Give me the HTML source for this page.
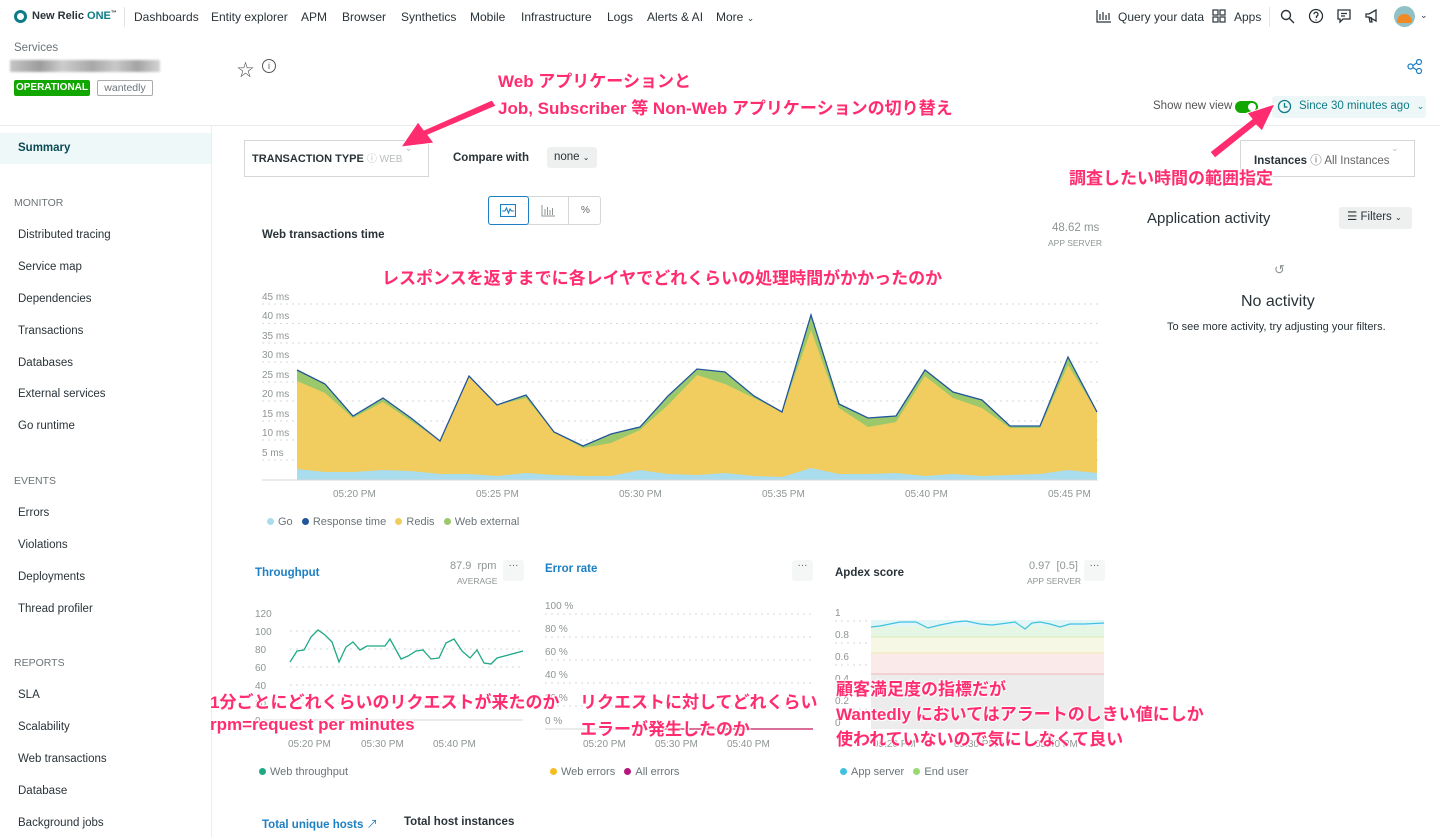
<!DOCTYPE html>
<html><head><meta charset="utf-8"><style>
*{box-sizing:border-box;margin:0;padding:0}
body{width:1440px;height:837px;overflow:hidden;background:#fff;font-family:"Liberation Sans","Noto Sans CJK JP",sans-serif;color:#293338;position:relative;font-size:12px}
.a{position:absolute;white-space:nowrap}
.nav{font-size:12px;color:#293338}
.side{font-size:11.5px;color:#293338}
.sec{font-size:10.5px;color:#6b7478}
.g{color:#8e9494}
.ann{position:absolute;white-space:nowrap;color:#ff2d6f;font-weight:bold;font-size:17px;text-shadow:0 0 2px #fff,0 0 2px #fff,1px 1px 1px #fff,-1px -1px 1px #fff;font-family:"Liberation Sans","Noto Sans CJK JP",sans-serif}
.dot{display:inline-block;width:7px;height:7px;border-radius:50%;margin-right:4px;vertical-align:0}
.leg{font-size:11px;color:#6b7478}
.ax{font-size:10px;color:#8e9494}
</style></head><body>
<!-- top nav -->
<div class="a" style="left:14px;top:10px;width:13px;height:13px;border-radius:50%;border:3px solid #0e7c86"></div>
<div class="a" style="left:32px;top:10px;font-size:11px;font-weight:bold;color:#293338">New Relic <span style="color:#0e7c86">ONE</span><sup style="font-size:6px">™</sup></div>
<div class="a" style="left:124px;top:7px;width:1px;height:20px;background:#e3e4e4"></div>
<div class="a nav" style="left:134px;top:10px">Dashboards</div>
<div class="a nav" style="left:211px;top:10px">Entity explorer</div>
<div class="a nav" style="left:301px;top:10px">APM</div>
<div class="a nav" style="left:342px;top:10px">Browser</div>
<div class="a nav" style="left:401px;top:10px">Synthetics</div>
<div class="a nav" style="left:470px;top:10px">Mobile</div>
<div class="a nav" style="left:521px;top:10px">Infrastructure</div>
<div class="a nav" style="left:607px;top:10px">Logs</div>
<div class="a nav" style="left:647px;top:10px">Alerts &amp; AI</div>
<div class="a nav" style="left:716px;top:10px">More <span style="font-size:9px">⌄</span></div>
<svg class="a" style="left:1096px;top:9px" width="16" height="14" viewBox="0 0 16 14" fill="none" stroke="#293338" stroke-width="1.2"><path d="M1 1v12h14M4 5v6M7 3v8M10 6v5M13 4v7"/></svg>
<div class="a nav" style="left:1118px;top:10px">Query your data</div>
<svg class="a" style="left:1212px;top:9px" width="14" height="14" viewBox="0 0 14 14" fill="none" stroke="#293338" stroke-width="1.2"><rect x="1" y="1" width="5" height="5"/><rect x="8" y="1" width="5" height="5"/><rect x="1" y="8" width="5" height="5"/><rect x="8" y="8" width="5" height="5"/></svg>
<div class="a nav" style="left:1234px;top:10px">Apps</div>
<div class="a" style="left:1269px;top:7px;width:1px;height:20px;background:#e3e4e4"></div>
<svg class="a" style="left:1280px;top:9px" width="15" height="15" viewBox="0 0 15 15" fill="none" stroke="#293338" stroke-width="1.4"><circle cx="6" cy="6" r="4.5"/><path d="M9.5 9.5L14 14"/></svg>
<svg class="a" style="left:1308px;top:8px" width="16" height="16" viewBox="0 0 16 16" fill="none" stroke="#293338" stroke-width="1.3"><circle cx="8" cy="8" r="6.5"/><path d="M6 6.3a2 2 0 1 1 2.5 1.9V10M8 11.5v1"/></svg>
<svg class="a" style="left:1336px;top:8px" width="16" height="16" viewBox="0 0 16 16" fill="none" stroke="#293338" stroke-width="1.3"><path d="M2 2h12v9H7l-3 3v-3H2z M5 5.5h6M5 8h4"/></svg>
<svg class="a" style="left:1364px;top:8px" width="16" height="16" viewBox="0 0 16 16" fill="none" stroke="#293338" stroke-width="1.3"><path d="M2 6h3l7-4v11l-7-4H2z M5 9l1 5h2l-1-5"/></svg>
<div class="a" style="left:1394px;top:6px;width:21px;height:21px;border-radius:50%;background:#8fc1c6;overflow:hidden"><div style="margin:8px 0 0 3px;width:15px;height:9px;background:#f08a25;border-radius:8px 8px 2px 2px"></div></div>
<div class="a" style="left:1420px;top:10px;font-size:9px">⌄</div>
<!-- header -->
<div class="a" style="left:14px;top:42px;font-size:11.5px;color:#6b7478">Services</div>
<div class="a" style="left:10px;top:60px;width:150px;height:12px;background:linear-gradient(90deg,#bbb,#8c8c8c 20%,#c4c4c4 35%,#999 55%,#c0c0c0 70%,#959595 85%,#ccc);opacity:.85;filter:blur(1px)"></div>
<div class="a" style="left:237px;top:56px;font-size:17px;color:#555">☆</div>
<div class="a" style="left:262px;top:59px;width:14px;height:14px;border-radius:50%;border:1.2px solid #555;font-size:9px;text-align:center;line-height:12px;color:#555">i</div>
<div class="a" style="left:14px;top:80px;width:76px;height:16px;background:#11a600;border-radius:2px;color:#fff;font-size:10px;font-weight:bold;text-align:center;line-height:16px">OPERATIONAL</div>
<div class="a" style="left:97px;top:80px;width:56px;height:16px;border:1px solid #aaa;border-radius:2px;color:#6b7478;font-size:10.5px;text-align:center;line-height:14px">wantedly</div>
<svg class="a" style="left:1407px;top:59px" width="16" height="15" viewBox="0 0 16 15" fill="none" stroke="#1d7fc3" stroke-width="1.2"><circle cx="3.5" cy="7.5" r="2.5"/><circle cx="12" cy="3" r="2.5"/><circle cx="12" cy="12" r="2.5"/><path d="M6 6.5l3.5-2.5M6 8.5l3.5 2.5"/></svg>
<div class="a" style="left:1153px;top:100px;font-size:11.5px;color:#555">Show new view</div>
<div class="a" style="left:1235px;top:101px;width:23px;height:12px;border-radius:6px;background:#11a600"><div style="margin:2px 0 0 13px;width:8px;height:8px;border-radius:50%;background:#fff"></div></div>
<div class="a" style="left:1272px;top:96px;width:154px;height:22px;background:#edf7f8;border-radius:3px"></div>
<svg class="a" style="left:1277px;top:99px" width="15" height="15" viewBox="0 0 15 15" fill="none" stroke="#0e7c86" stroke-width="1.3"><circle cx="7.5" cy="7.5" r="6"/><path d="M7.5 4v4h3"/></svg>
<div class="a" style="left:1299px;top:100px;font-size:11.5px;color:#0e7c86">Since 30 minutes ago <span style="font-size:9px;margin-left:4px">⌄</span></div>
<div class="a" style="left:0;top:125px;width:1440px;height:1px;background:#e9eaea"></div>
<!-- sidebar -->
<div class="a" style="left:211px;top:126px;width:1px;height:711px;background:#eceded"></div>
<div class="a" style="left:0;top:133px;width:211px;height:31px;background:#eef8f9"></div>
<div class="a side" style="left:18px;top:142px;font-weight:bold;color:#0b4a55">Summary</div>
<div class="a sec" style="left:14px;top:197px">MONITOR</div>
<div class="a side" style="left:18px;top:229px">Distributed tracing</div>
<div class="a side" style="left:18px;top:261px">Service map</div>
<div class="a side" style="left:18px;top:293px">Dependencies</div>
<div class="a side" style="left:18px;top:325px">Transactions</div>
<div class="a side" style="left:18px;top:357px">Databases</div>
<div class="a side" style="left:18px;top:388px">External services</div>
<div class="a side" style="left:18px;top:420px">Go runtime</div>
<div class="a sec" style="left:14px;top:475px">EVENTS</div>
<div class="a side" style="left:18px;top:507px">Errors</div>
<div class="a side" style="left:18px;top:539px">Violations</div>
<div class="a side" style="left:18px;top:571px">Deployments</div>
<div class="a side" style="left:18px;top:603px">Thread profiler</div>
<div class="a sec" style="left:14px;top:657px">REPORTS</div>
<div class="a side" style="left:18px;top:689px">SLA</div>
<div class="a side" style="left:18px;top:721px">Scalability</div>
<div class="a side" style="left:18px;top:753px">Web transactions</div>
<div class="a side" style="left:18px;top:785px">Database</div>
<div class="a side" style="left:18px;top:817px">Background jobs</div>
<!-- controls -->
<div class="a" style="left:244px;top:140px;width:185px;height:37px;border:1px solid #d5d7d7"></div>
<div class="a" style="left:252px;top:150px;font-size:11px;font-weight:bold">TRANSACTION TYPE <span style="color:#b9bdbd;font-weight:normal;font-size:10px">ⓘ WEB</span></div>
<div class="a" style="left:405px;top:143px;font-size:9px;color:#b9bdbd">⌄</div>
<div class="a" style="left:453px;top:152px;font-size:11.5px;font-weight:bold">Compare with</div>
<div class="a" style="left:547px;top:147px;width:50px;height:21px;background:#eef0f0;border-radius:3px;font-size:11.5px;line-height:20px;padding-left:7px">none <span style="font-size:8px">⌄</span></div>
<div class="a" style="left:1240px;top:140px;width:175px;height:37px;border:1px solid #d5d7d7"></div>
<div class="a" style="left:1254px;top:152px;font-size:11.5px"><b>Instances</b> <span style="color:#666">ⓘ All Instances</span></div>
<div class="a" style="left:1391px;top:143px;font-size:9px;color:#b9bdbd">⌄</div>
<!-- chart toggle -->
<div class="a" style="left:488px;top:196px;width:113px;height:29px;border:1px solid #d5d7d7;border-radius:3px"></div>
<div class="a" style="left:488px;top:196px;width:41px;height:29px;border:1.5px solid #1d7fc3;border-radius:3px"></div>
<svg class="a" style="left:500px;top:204px" width="16" height="13" viewBox="0 0 16 13" fill="none" stroke="#1d7fc3" stroke-width="1.1"><rect x=".5" y=".5" width="15" height="12"/><path d="M2 7h3l1.5-3 2 5 1.5-4 1.5 2h2.5"/></svg>
<div class="a" style="left:568px;top:196px;width:1px;height:29px;background:#d5d7d7"></div>
<svg class="a" style="left:541px;top:204px" width="15" height="13" viewBox="0 0 15 13" fill="none" stroke="#8e9494" stroke-width="1"><path d="M1 1v11h13M4 5v6M6.5 3v8M9 6v5M11.5 4v7"/></svg>
<div class="a" style="left:581px;top:205px;font-size:10px;color:#666">%</div>
<!-- main chart -->
<div class="a" style="left:262px;top:229px;font-size:11.5px;font-weight:bold;color:#293338">Web transactions time</div>
<div class="a" style="left:1052px;top:222px;font-size:11.5px;color:#8e9494">48.62 ms</div>
<div class="a" style="left:1048px;top:238px;font-size:8.5px;color:#8e9494">APP SERVER</div>
<div class="a" style="left:1147px;top:210px;font-size:15px;color:#293338">Application activity</div>
<div class="a" style="left:1339px;top:207px;width:73px;height:22px;background:#eef0f0;border-radius:3px;font-size:11.5px;line-height:21px;padding-left:8px">☰ Filters <span style="font-size:8px">⌄</span></div>
<div class="a" style="left:1274px;top:262px;font-size:13px;color:#8e9494">↺</div>
<div class="a" style="left:1241px;top:293px;font-size:16px;color:#293338">No activity</div>
<div class="a" style="left:1167px;top:321px;font-size:11px;color:#293338">To see more activity, try adjusting your filters.</div>

<svg class="a" style="left:0;top:0" width="1440" height="837">
<g stroke="#d5d7d7" stroke-dasharray="2,4" stroke-width="1">
<path d="M262 304H1098M262 323.5H1098M262 343H1098M262 362H1098M262 382H1098M262 401H1098M262 421H1098M262 440H1098M262 460H1098"/>
<path d="M290 631H523M290 649H523M290 667H523M290 685H523M290 703H523M545 614H813M545 637H813M545 660H813M545 683H813M545 706H813M835 621H1104M835 643H1104M835 665H1104M835 687H1104M835 709H1104"/>
</g>
<g font-family="Liberation Sans,sans-serif" font-size="10" fill="#8e9494">
<text x="262" y="300">45 ms</text><text x="262" y="319">40 ms</text><text x="262" y="339">35 ms</text><text x="262" y="358">30 ms</text><text x="262" y="378">25 ms</text><text x="262" y="397">20 ms</text><text x="262" y="417">15 ms</text><text x="262" y="436">10 ms</text><text x="262" y="456">5 ms</text>
<text x="333" y="497">05:20 PM</text><text x="476" y="497">05:25 PM</text><text x="619" y="497">05:30 PM</text><text x="762" y="497">05:35 PM</text><text x="905" y="497">05:40 PM</text><text x="1048" y="497">05:45 PM</text>
<text x="255" y="617">120</text><text x="255" y="635">100</text><text x="255" y="653">80</text><text x="255" y="671">60</text><text x="255" y="689">40</text><text x="255" y="707">20</text><text x="255" y="724">0</text>
<text x="288" y="747">05:20 PM</text><text x="361" y="747">05:30 PM</text><text x="433" y="747">05:40 PM</text>
<text x="545" y="609">100 %</text><text x="545" y="632">80 %</text><text x="545" y="655">60 %</text><text x="545" y="678">40 %</text><text x="545" y="701">20 %</text><text x="545" y="724">0 %</text>
<text x="583" y="747">05:20 PM</text><text x="655" y="747">05:30 PM</text><text x="727" y="747">05:40 PM</text>
<text x="835" y="616">1</text><text x="835" y="638">0.8</text><text x="835" y="660">0.6</text><text x="835" y="682">0.4</text><text x="835" y="704">0.2</text><text x="835" y="726">0</text>
<text x="873" y="747">05:20 PM</text><text x="954" y="747">05:30 PM</text><text x="1035" y="747">05:40 PM</text>
</g>
<polygon fill="#9bc86a" points="297,370 325,384 353,416 383,398 411,418 440,441 469,376 497,405 526,395 554,432 583,446 611,434 640,427 668,396 697,369 725,372 754,396 782,412 811,315 839,404 868,418 896,416 925,370 953,392 982,400 1010,426 1040,426 1068,357 1097,412 1097,480 297,480"/>
<polygon fill="#f1cd60" points="297,381 325,393 353,418 383,402 411,421 440,441 469,376 497,405 526,398 554,432 583,448 611,443 640,430 668,405 697,375 725,384 754,398 782,412 811,330 839,408 868,427 896,422 925,376 953,398 982,408 1010,428 1040,428 1068,365 1097,412 1097,480 297,480"/>
<polygon fill="#a9dced" points="297,469 325,472 353,472 383,470 411,471 440,474 469,474 497,476 526,473 554,475 583,476 611,476 640,470 668,474 697,475 725,473 754,476 782,477 811,468 839,474 868,474 896,473 925,476 953,474 982,476 1010,475 1040,474 1068,470 1097,473 1097,480 297,480"/>
<polyline fill="none" stroke="#22559c" stroke-width="1.3" points="297,370 325,384 353,416 383,398 411,418 440,441 469,376 497,405 526,395 554,432 583,446 611,434 640,427 668,396 697,369 725,372 754,396 782,412 811,315 839,404 868,418 896,416 925,370 953,392 982,400 1010,426 1040,426 1068,357 1097,412"/>
<path d="M262 480H1098" stroke="#d5d7d7"/>
<polyline fill="none" stroke="#1ea886" stroke-width="1.3" points="290,662 297,651 304,650 311,637 318,630 325,635 332,642 339,662 346,647 353,642 360,650 367,646 374,646 385,646 390,639 401,659 408,656 416,651 423,650 431,659 439,658 446,643 454,639 462,651 470,658 477,650 484,663 491,664 497,658 523,651"/>
<path d="M262 720H523" stroke="#d5d7d7"/>
<path d="M545 729H813" stroke="#d5d7d7"/>
<path d="M660 729H813" stroke="#c2185b" stroke-width="1.2"/>
<rect x="871" y="620" width="233" height="6" fill="#e2f5f7"/>
<rect x="871" y="626" width="233" height="11" fill="#e6f6e4"/>
<rect x="871" y="637" width="233" height="16" fill="#f7f7e5"/>
<rect x="871" y="653" width="233" height="21" fill="#fbeaea"/>
<rect x="871" y="674" width="233" height="55" fill="#ececec"/>
<path d="M871 637H1104" stroke="#d6e8b4"/><path d="M871 653H1104" stroke="#ece7b0"/><path d="M871 674H1104" stroke="#f1b7b7"/>
<polyline fill="none" stroke="#3fc2e2" stroke-width="1.2" points="871,627 880,626 890,624 900,622 916,622 928,628 940,625 955,622 966,621 980,624 992,625 1000,624 1015,622 1025,629 1032,623 1040,622 1050,624 1060,627 1070,624 1085,624 1104,623"/>
</svg>
<div class="a" style="left:255px;top:567px;font-size:11.5px;font-weight:bold;color:#1d7fc3">Throughput</div>
<div class="a" style="left:450px;top:560px;font-size:11px;color:#8e9494">87.9 &nbsp;rpm</div>
<div class="a" style="left:457px;top:576px;font-size:8.5px;color:#8e9494">AVERAGE</div>
<div class="a" style="left:503px;top:560px;width:21px;height:21px;background:#f5f6f6;border-radius:3px;text-align:center;font-size:10px;color:#555">···</div>
<div class="a" style="left:545px;top:563px;font-size:11.5px;font-weight:bold;color:#1d7fc3">Error rate</div>
<div class="a" style="left:792px;top:560px;width:21px;height:21px;background:#f5f6f6;border-radius:3px;text-align:center;font-size:10px;color:#555">···</div>
<div class="a" style="left:835px;top:567px;font-size:11.5px;font-weight:bold">Apdex score</div>
<div class="a" style="left:1029px;top:560px;font-size:11px;color:#8e9494">0.97 &nbsp;[0.5]</div>
<div class="a" style="left:1027px;top:576px;font-size:8.5px;color:#8e9494">APP SERVER</div>
<div class="a" style="left:1084px;top:560px;width:21px;height:21px;background:#f5f6f6;border-radius:3px;text-align:center;font-size:10px;color:#555">···</div>
<div class="a leg" style="left:267px;top:516px"><span class="dot" style="background:#a9dced"></span>Go &nbsp; <span class="dot" style="background:#22559c"></span>Response time &nbsp; <span class="dot" style="background:#f1cd60"></span>Redis &nbsp; <span class="dot" style="background:#9bc86a"></span>Web external</div>
<div class="a leg" style="left:259px;top:766px"><span class="dot" style="background:#1ea886"></span>Web throughput</div>
<div class="a leg" style="left:550px;top:766px"><span class="dot" style="background:#f5bd1f"></span>Web errors &nbsp; <span class="dot" style="background:#b5177c"></span>All errors</div>
<div class="a leg" style="left:840px;top:766px"><span class="dot" style="background:#3fc2e2"></span>App server &nbsp; <span class="dot" style="background:#9ad96f"></span>End user</div>
<div class="a" style="left:262px;top:816px;font-size:11.5px;font-weight:bold;color:#1d7fc3">Total unique hosts <span style="font-weight:normal">↗</span></div>
<div class="a" style="left:404px;top:816px;font-size:11.5px;font-weight:bold">Total host instances</div>
<svg class="a" style="left:0;top:0" width="1440" height="837">
<g fill="#ff2d6f" stroke="#fff" stroke-width="1">
<polygon points="492,100 496,106 428,135 434,143 401,147 418,122 424,130"/>
<polygon points="1210,152 1215,158 1256,125 1262,131 1275,104 1247,113 1252,119"/>
</g>
</svg>
<div class="ann" style="left:498px;top:67px">Web アプリケーションと</div>
<div class="ann" style="left:498px;top:94px">Job, Subscriber 等 Non-Web アプリケーションの切り替え</div>
<div class="ann" style="left:1069px;top:164px">調査したい時間の範囲指定</div>
<div class="ann" style="left:382px;top:264px">レスポンスを返すまでに各レイヤでどれくらいの処理時間がかかったのか</div>
<div class="ann" style="left:210px;top:688px">1分ごとにどれくらいのリクエストが来たのか</div>
<div class="ann" style="left:210px;top:715px">rpm=request per minutes</div>
<div class="ann" style="left:580px;top:688px">リクエストに対してどれくらい</div>
<div class="ann" style="left:580px;top:715px">エラーが発生したのか</div>
<div class="ann" style="left:836px;top:675px">顧客満足度の指標だが</div>
<div class="ann" style="left:836px;top:700px">Wantedly においてはアラートのしきい値にしか</div>
<div class="ann" style="left:836px;top:725px">使われていないので気にしなくて良い</div>
</body></html>
